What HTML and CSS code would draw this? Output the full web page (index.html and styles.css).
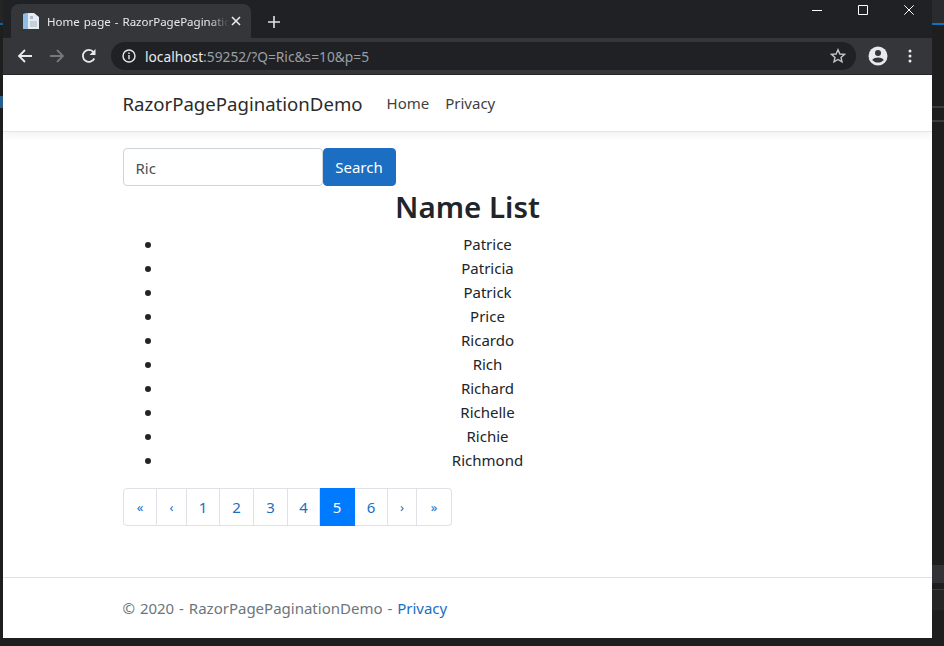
FILE: index.html
```html
<!DOCTYPE html>
<html lang="en">
  <head>
    <meta charset="UTF-8" />
    <meta name="viewport" content="width=device-width, initial-scale=1.0" />
    <title>Home page - RazorPagePaginationDemo</title>
    <link rel="stylesheet" href="styles.css">
  </head>
  <body>
    <div id="screen">
      <div class="edge edge-left">
        <div class="left-top"></div>
        <div class="left-blue"></div>
        <div class="left-mark"></div>
      </div>

      <div id="browser">
        <!-- tab strip -->
        <div class="tabstrip">
          <div class="tab">
            <svg class="favicon" width="16" height="16" viewBox="0 0 16 16">
              <path d="M0 1l6-1h5l5 4v12H0z" fill="#e4ecf4"/>
              <path d="M0 1l5-1v16H0z" fill="#8fbde6"/>
              <path d="M7 8h7v6H7z" fill="#c6ced6"/>
              <path d="M7 3h3v3H7z" fill="#aebccb"/>
            </svg>
            <span class="tab-title">Home page - RazorPagePaginatio</span>
            <svg class="tab-close" width="10" height="10" viewBox="0 0 10 10">
              <path d="M1 1l8 8M9 1l-8 8" stroke="#e8eaed" stroke-width="1.6"/>
            </svg>
          </div>
          <svg class="new-tab" width="12" height="12" viewBox="0 0 12 12">
            <path d="M6 0v12M0 6h12" stroke="#dee1e6" stroke-width="1.6"/>
          </svg>
          <div class="win-controls">
            <svg width="10" height="10" viewBox="0 0 10 10"><path d="M0 5.500h10" stroke="#fff"/></svg>
            <svg width="10" height="10" viewBox="0 0 10 10"><path d="M.5.5h9v9h-9z" fill="none" stroke="#fff"/></svg>
            <svg width="10" height="10" viewBox="0 0 10 10"><path d="M.3.3l9.400 9.400M9.700.3L.3 9.700" stroke="#fff"/></svg>
          </div>
        </div>

        <!-- toolbar -->
        <div class="toolbar">
          <svg class="tool" width="16" height="16" viewBox="0 0 16 16">
            <path d="M15 8H2M8 2L2 8l6 6" fill="none" stroke="#e8eaed" stroke-width="1.8"/>
          </svg>
          <svg class="tool" width="16" height="16" viewBox="0 0 16 16">
            <path d="M1 8h13M8 2l6 6-6 6" fill="none" stroke="#75787c" stroke-width="1.8"/>
          </svg>
          <svg class="tool" width="16" height="16" viewBox="0 0 16 16">
            <path d="M13.300 10.500A6 6 0 1 1 12.500 4" fill="none" stroke="#e8eaed" stroke-width="1.800"/>
            <path d="M14.500 1v6h-6z" fill="#e8eaed"/>
          </svg>
          <div class="omnibox">
            <svg width="14" height="14" viewBox="0 0 14 14">
              <circle cx="7" cy="7" r="6" fill="none" stroke="#e8eaed" stroke-width="1.400"/>
              <path d="M7 6v4.200M7 3.500v1.400" stroke="#e8eaed" stroke-width="1.400"/>
            </svg>
            <span class="url"><b>localhost</b>:59252/?Q=Ric&amp;s=10&amp;p=5</span>
            <svg class="star" width="16" height="16" viewBox="0 0 16 16">
              <path d="M8 1.800l1.900 4.200 4.500.4-3.400 3 1 4.500L8 11.500l-4 2.400 1-4.500-3.400-3 4.500-.4z" fill="none" stroke="#c4c7cb" stroke-width="1.400"/>
            </svg>
          </div>
          <svg class="avatar" width="20" height="20" viewBox="0 0 20 20">
            <circle cx="10" cy="10" r="9.500" fill="#e8eaed"/>
            <circle cx="10" cy="7" r="3" fill="#35363a"/>
            <path d="M4.200 14c1.500-2 3.500-2.600 5.800-2.600s4.300.6 5.800 2.600c-1.500 1.700-3.500 2.600-5.800 2.600s-4.300-.9-5.800-2.600z" fill="#35363a"/>
          </svg>
          <svg class="menu" width="4" height="14" viewBox="0 0 4 14">
            <circle cx="2" cy="2" r="1.500" fill="#e8eaed"/>
            <circle cx="2" cy="7" r="1.500" fill="#e8eaed"/>
            <circle cx="2" cy="12" r="1.500" fill="#e8eaed"/>
          </svg>
        </div>

        <!-- the page itself -->
        <div class="page">
          <nav class="navbar">
            <div class="container nav-inner">
              <a class="brand">RazorPagePaginationDemo</a>
              <a class="nav-link">Home</a>
              <a class="nav-link">Privacy</a>
            </div>
          </nav>

          <main class="container">
            <form class="search">
              <input class="search-input" type="text" value="Ric" />
              <button class="search-btn" type="button">Search</button>
            </form>
            <h1>Name List</h1>
            <ul class="names">
              <li>Patrice</li>
              <li>Patricia</li>
              <li>Patrick</li>
              <li>Price</li>
              <li>Ricardo</li>
              <li>Rich</li>
              <li>Richard</li>
              <li>Richelle</li>
              <li>Richie</li>
              <li>Richmond</li>
            </ul>
            <div class="pagination">
              <a class="pg pg-arrow w34">«</a>
              <a class="pg pg-arrow w30">‹</a>
              <a class="pg w33">1</a>
              <a class="pg w34">2</a>
              <a class="pg w34">3</a>
              <a class="pg w32">4</a>
              <a class="pg active w35">5</a>
              <a class="pg w33">6</a>
              <a class="pg pg-arrow w29">›</a>
              <a class="pg pg-arrow w35">»</a>
            </div>
          </main>

          <footer class="footer">
            <div class="container">© 2020 - RazorPagePaginationDemo - <a class="footer-link">Privacy</a></div>
          </footer>
        </div>
      </div>

      <div class="edge edge-right">
        <div class="right-top"></div>
        <div class="right-blue"></div>
        <div class="right-line first"></div>
        <div class="right-line second"></div>
        <div class="right-box"></div>
        <div class="right-line third"></div>
        <div class="right-dots"></div>
      </div>
    </div>
  </body>
</html>
```

FILE: styles.css
```css
* {
  box-sizing: border-box;
}
html, body {
  margin: 0;
  height: 100%;
}
body {
  background: #1e1e1e;
  font-family: "Noto Sans", "Liberation Sans", sans-serif;
  color: #212529;
  overflow: hidden;
}
#screen {
  display: flex;
  height: 646px;
}

/* bits of the window behind the browser */
.edge {
  background: #1e1e1e;
}
.edge-left {
  width: 3px;
}
.left-top {
  height: 23px;
  background: #252526;
}
.left-blue {
  height: 2px;
  background: #0e639c;
}
.left-mark {
  height: 12px;
  margin-top: 71px;
  background: #2a5f8f;
}
.edge-right {
  width: 12px;
}
.right-top {
  height: 23px;
  background: #2a2b2d;
}
.right-blue {
  height: 2px;
  background: #0e70c0;
}
.right-line {
  height: 2px;
  background: #3c3c3c;
}
.first {
  margin-top: 81px;
}
.second {
  margin-top: 12px;
}
.right-box {
  height: 18px;
  margin-top: 443px;
  background: #333337;
}
.third {
  height: 1px;
  margin-top: 6px;
}
.right-dots {
  height: 20px;
  background: #252526;
}

#browser {
  width: 929px;
  display: flex;
  flex-direction: column;
  padding-bottom: 8px;
}

/* chrome */
.tabstrip {
  height: 38px;
  background: #202124;
  display: flex;
  align-items: flex-end;
  padding-left: 8px;
  position: relative;
}
.tab {
  width: 240px;
  height: 34px;
  background: #35363a;
  border-radius: 8px 8px 0 0;
  display: flex;
  align-items: center;
  padding: 0 10px 0 12px;
  color: #e8eaed;
  font-size: 11.500px;
}
.favicon {
  flex: none;
}
.tab-title {
  margin-left: 8px;
  white-space: nowrap;
  word-spacing: 1px;
  -webkit-mask-image: linear-gradient(to right, #000 88%, transparent 99%);
}
.tab-close {
  margin-left: auto;
  flex: none;
}
.new-tab {
  margin: 0 0 10px 17px;
}
.win-controls {
  position: absolute;
  top: 5px;
  right: 18px;
  display: flex;
  align-items: center;
  gap: 36px;
}
.toolbar {
  height: 37px;
  background: #35363a;
  border-bottom: 1px solid #26272a;
  display: flex;
  align-items: center;
  padding: 0 14px;
}
.tool {
  margin-right: 16px;
  flex: none;
}
.toolbar .tool:nth-child(3) {
  margin-right: 14px;
}
.omnibox {
  width: 745px;
  height: 28px;
  background: #202124;
  border-radius: 14px;
  display: flex;
  align-items: center;
  padding: 0 10px 0 11px;
  font-size: 13.750px;
  color: #9aa0a6;
}
.url {
  margin-left: 9px;
  flex: 1;
}
.url b {
  font-weight: 400;
  color: #e8eaed;
}
.avatar {
  margin-left: 12px;
  flex: none;
}
.menu {
  margin-left: 20px;
  flex: none;
}

/* page */
.page {
  flex: 1;
  background: #fff;
  display: flex;
  flex-direction: column;
}
.container {
  width: 720px;
  margin: 0 auto;
  padding: 0 15px;
}
.navbar {
  height: 57px;
  border-bottom: 1px solid #e5e5e5;
  box-shadow: 0 4px 8px rgba(0, 0, 0, 0.05);
}
.nav-inner {
  display: flex;
  align-items: center;
  height: 56px;
}
.brand {
  font-size: 18.600px;
  color: #2b2b2b;
  margin-right: 16px;
}
.nav-link {
  font-size: 15px;
  color: #3f3f3f;
  padding: 0 8px;
}
main {
  flex: 1;
  padding-top: 16px !important;
}
.search {
  display: flex;
  height: 38px;
}
.search-input {
  width: 200px;
  height: 38px;
  border: 1px solid #ced4da;
  border-radius: 4px;
  padding: 1px 12px 0;
  font: inherit;
  font-size: 15px;
  color: #495057;
}
.search-btn {
  width: 73px;
  height: 38px;
  border: 1px solid #1b6ec2;
  border-radius: 4px;
  background: #1b6ec2;
  color: #fff;
  font: inherit;
  font-size: 15px;
  padding: 0;
}
h1 {
  margin: 0;
  text-align: center;
  font-size: 29.500px;
  font-weight: 600;
  line-height: 42px;
  color: #212529;
}
.names {
  margin: 4px 0 0;
  padding-left: 40px;
  font-size: 15px;
  line-height: 24px;
  text-align: center;
  list-style: none;
}
.names li {
  position: relative;
}
.names li::before {
  content: "";
  position: absolute;
  left: -18px;
  top: 10px;
  width: 6px;
  height: 6px;
  border-radius: 50%;
  background: #212529;
}
.pagination {
  display: flex;
  width: 329px;
  height: 38px;
  margin-top: 16px;
}
.pg {
  height: 38px;
  border: 1px solid #dee2e6;
  border-left: 0;
  padding-left: 1px;
  display: flex;
  align-items: center;
  justify-content: center;
  color: #1b6ec2;
  font-size: 15px;
}
.pg:first-child {
  border-left: 1px solid #dee2e6;
  border-radius: 4px 0 0 4px;
}
.pg:last-child {
  border-radius: 0 4px 4px 0;
}
.pg-arrow {
  font-size: 13px;
}
.active {
  background: #007bff;
  border-color: #007bff;
  color: #fff;
}
.w29 { width: 29px; }
.w30 { width: 30px; }
.w32 { width: 32px; }
.w33 { width: 33px; }
.w34 { width: 34px; }
.w35 { width: 35px; }
.footer {
  height: 61px;
  border-top: 1px solid #dee2e6;
  display: flex;
  align-items: center;
  font-size: 15px;
  word-spacing: 1px;
  color: #6c757d;
}
.footer-link {
  color: #1b6ec2;
}
```
